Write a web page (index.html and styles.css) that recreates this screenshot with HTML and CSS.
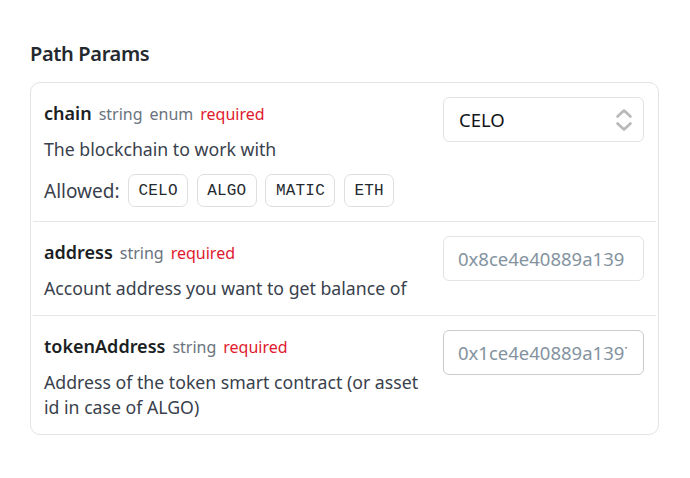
FILE: index.html
```html
<!DOCTYPE html>
<html lang="en">
<head>
<meta charset="utf-8">
<title>Path Params</title>
<link rel="stylesheet" href="styles.css">
</head>
<body>
<section class="params">
  <h2 class="params-title">Path Params</h2>
  <div class="card">
    <div class="row">
      <div class="info">
        <div class="name-line">
          <span class="name">chain</span>
          <span class="type">string</span>
          <span class="type">enum</span>
          <span class="req">required</span>
        </div>
        <p class="desc">The blockchain to work with</p>
        <div class="allowed">
          <span class="allowed-label">Allowed:</span>
          <span class="chip">CELO</span>
          <span class="chip">ALGO</span>
          <span class="chip">MATIC</span>
          <span class="chip">ETH</span>
        </div>
      </div>
      <div class="field select">
        <span class="select-value">CELO</span>
        <svg class="chevrons" width="18" height="24" viewBox="0 0 18 24" fill="none" stroke="#b8b8b8" stroke-width="2.6" stroke-linecap="round" stroke-linejoin="round">
          <path d="M2.5 8.5 L9 2.5 L15.5 8.5"/>
          <path d="M2.5 15.5 L9 21.5 L15.5 15.5"/>
        </svg>
      </div>
    </div>
    <div class="row">
      <div class="info">
        <div class="name-line">
          <span class="name">address</span>
          <span class="type">string</span>
          <span class="req">required</span>
        </div>
        <p class="desc">Account address you want to get balance of</p>
      </div>
      <input class="field input" type="text" placeholder="0x8ce4e40889a139 6bd3a7a6d6e6d6e2ff6c6ba1d">
    </div>
    <div class="row">
      <div class="info">
        <div class="name-line">
          <span class="name">tokenAddress</span>
          <span class="type">string</span>
          <span class="req">required</span>
        </div>
        <p class="desc">Address of the token smart contract (or asset id in case of ALGO)</p>
      </div>
      <input class="field input input-hover" type="text" placeholder="0x1ce4e40889a1397bd3a7a6d6e6d6e2ff6c6ba1d">
    </div>
  </div>
</section>
</body>
</html>
```
FILE: styles.css
```css
* { box-sizing: border-box; }
html, body { margin: 0; padding: 0; background: #ffffff; }
body {
  font-family: "Noto Sans", "Open Sans", sans-serif;
  color: #1f2328;
}
.params {
  padding: 40px 31px 0 30px;
}
.params-title {
  margin: 0 0 14px 0;
  font-size: 20px;
  font-weight: 600;
  letter-spacing: -0.35px;
  line-height: 28px;
  color: #24292f;
}
.card {
  border: 1px solid #e3e3e3;
  border-radius: 10px;
  padding: 0 2px;
}
.row {
  display: flex;
  justify-content: space-between;
  align-items: flex-start;
  padding: 14px 12px 14px 11px;
  border-bottom: 1px solid #e6e6e6;
}
.row:last-child { border-bottom: none; }
.info {
  padding-top: 4px;
  flex: 1;
  min-width: 0;
  max-width: 385px;
}
.name-line {
  display: flex;
  align-items: baseline;
  gap: 7px;
  line-height: 24px;
  margin-bottom: 11px;
}
.name {
  font-size: 18px;
  font-weight: 600;
  color: #1b1f24;
}
.type {
  font-size: 16px;
  color: #6a737d;
}
.req {
  font-size: 16px;
  color: #e0192e;
}
.desc {
  margin: 0;
  font-size: 17.7px;
  line-height: 25px;
  color: #39414c;
}
.allowed {
  display: flex;
  align-items: center;
  gap: 8.5px;
  margin-top: 12px;
}
.allowed-label {
  font-size: 19px;
  color: #39414c;
}
.chip {
  display: inline-flex;
  align-items: center;
  height: 33px;
  padding: 0 9.5px;
  border: 1px solid #dedede;
  border-radius: 7px;
  font-family: "Liberation Mono", "DejaVu Sans Mono", monospace;
  font-size: 16px;
  letter-spacing: 0.2px;
  color: #24292f;
}
.field {
  flex: none;
  width: 201px;
  height: 45px;
  border: 1px solid #e3e3e3;
  border-radius: 6px;
  background: #ffffff;
}
.select {
  display: flex;
  align-items: center;
  justify-content: space-between;
  padding: 0 10px 0 15px;
}
.select-value {
  font-size: 18.5px;
  color: #111418;
}
.chevrons { display: block; }
.input {
  padding: 0 16px 0 14px;
  font-family: "Noto Sans", "Open Sans", sans-serif;
  font-size: 18.5px;
  color: #1f2328;
  outline: none;
}
.input::placeholder { color: #8493a0; }
.input-hover { border-color: #cbcbcb; }
```
